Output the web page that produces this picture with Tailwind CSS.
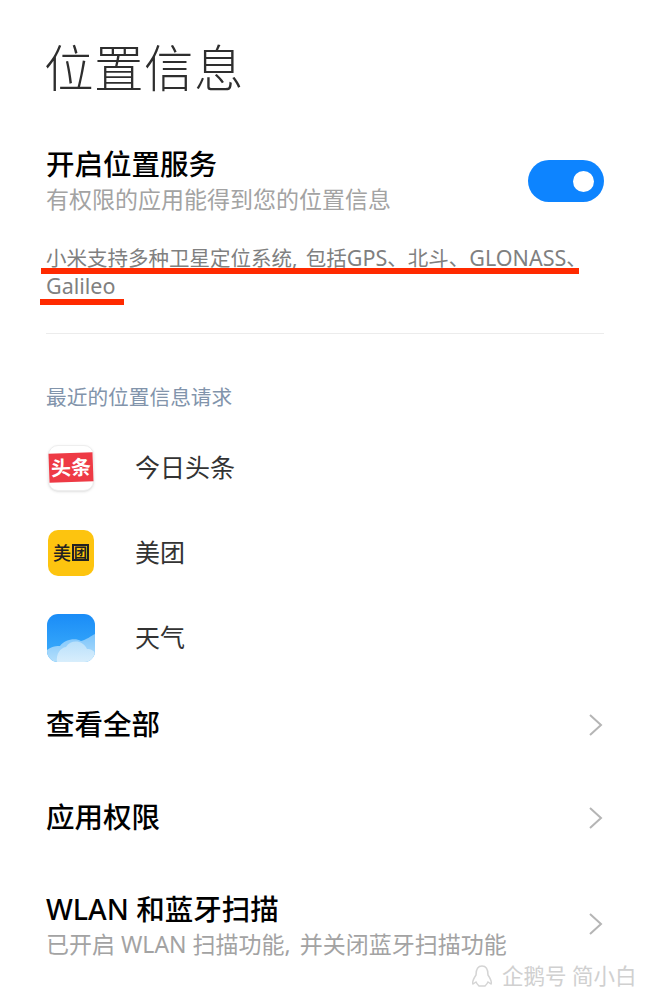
<!DOCTYPE html>
<html lang="zh-CN">
  <head>
    <meta charset="UTF-8" />
    <meta name="viewport" content="width=device-width, initial-scale=1.0" />
    <title>位置信息</title>
    <script src="https://cdn.jsdelivr.net/npm/@tailwindcss/browser@4"></script>
  </head>
  <body class="bg-white">
    <div class="relative w-[650px] h-[1000px] overflow-hidden px-[46px] font-['Noto_Sans','Noto_Sans_CJK_SC',sans-serif]">
      <h1 class="pt-[32px] h-[138px] -ml-[2px] text-[49.5px] leading-[72px] font-light text-[#2e2e2e] tracking-[0.5px]">位置信息</h1>

      <!-- location toggle -->
      <div class="flex items-center justify-between h-[86px]">
        <div>
          <div class="text-[28.5px] leading-[37px] font-medium text-black">开启位置服务</div>
          <div class="text-[23px] leading-[33px] text-[#a3a3a3]">有权限的应用能得到您的位置信息</div>
        </div>
        <div class="flex items-center justify-end w-[76px] h-[42px] rounded-full bg-[#0d84ff] pr-[10px]">
          <div class="w-[21px] h-[21px] rounded-full bg-white"></div>
        </div>
      </div>

      <p class="mt-[20px] text-[20.5px] leading-[28px] text-[#808080]">小米支持多种卫星定位系统<span class="mr-[3px]">, </span>包括<span class="text-[21.5px]">GPS</span>、北斗、<span class="text-[21.5px]">GLONASS</span>、<br /><span class="text-[21.5px]">Galileo</span></p>
      <div class="mt-[33px] border-t border-[#ececec]"></div>

      <div class="mt-[49px] h-[28px] text-[20.7px] leading-[28px] text-[#8294ab]">最近的位置信息请求</div>

      <!-- recent apps -->
      <div class="mt-[14px]">
        <div class="flex items-center h-[85px]">
          <div class="flex items-center w-[46px] h-[46px] ml-[2px] rounded-[10px] border border-[#eee] bg-white shadow-sm">
            <div class="flex items-center justify-center w-full h-[29px] -rotate-2 bg-[#ee3a45] text-white text-[20px] leading-none font-bold">头条</div>
          </div>
          <span class="ml-[41px] text-[25px] text-[#333]">今日头条</span>
        </div>
        <div class="flex items-center h-[85px]">
          <div class="flex items-center justify-center w-[46px] h-[46px] ml-[2px] rounded-[10px] bg-[#fdc40f] text-[#222] text-[18px] leading-none font-medium">美<span class="ml-[1px] border-2 border-[#222] text-[13px] font-bold">团</span></div>
          <span class="ml-[41px] text-[25px] text-[#333]">美团</span>
        </div>
        <div class="flex items-center h-[85px]">
          <svg class="ml-[1px]" width="48" height="48" viewBox="0 0 48 48">
            <defs>
              <linearGradient id="sky" x1="0" y1="0" x2="0" y2="1">
                <stop offset="0" stop-color="#1a8cf7" />
                <stop offset="1" stop-color="#3fb0fb" />
              </linearGradient>
              <linearGradient id="back" x1="0" y1="0" x2="0" y2="1">
                <stop offset="0" stop-color="#7cc4fb" />
                <stop offset="1" stop-color="#b4dffb" />
              </linearGradient>
              <linearGradient id="front" x1="0" y1="0" x2="0" y2="1">
                <stop offset="0" stop-color="#b9e0fb" />
                <stop offset="1" stop-color="#d8eefc" />
              </linearGradient>
              <clipPath id="tile"><rect width="48" height="48" rx="11" /></clipPath>
            </defs>
            <g clip-path="url(#tile)">
              <rect width="48" height="48" fill="url(#sky)" />
              <path d="M0 36C5 32 10 32 13 32C17 26 28 23 34 27C39 26 44 22 48 20V48H0Z" fill="url(#back)" />
              <path d="M10 48C9 40 13 34 19 33C24 25 36 26 40 35C44 35 48 37 48 40V48Z" fill="url(#front)" />
            </g>
          </svg>
          <span class="ml-[40px] text-[25px] text-[#333]">天气</span>
        </div>
      </div>

      <!-- settings rows -->
      <div class="flex items-center justify-between h-[93px] -mt-[2px]">
        <span class="text-[28.5px] font-medium text-black">查看全部</span>
        <svg width="16" height="24" viewBox="0 0 16 24" fill="none" stroke="#b5b5b5" stroke-width="2"><path d="M2 2L13 12L2 22" /></svg>
      </div>
      <div class="flex items-center justify-between h-[93px]">
        <span class="text-[28.5px] font-medium text-black">应用权限</span>
        <svg width="16" height="24" viewBox="0 0 16 24" fill="none" stroke="#b5b5b5" stroke-width="2"><path d="M2 2L13 12L2 22" /></svg>
      </div>
      <div class="flex items-center justify-between h-[124px]">
        <div>
          <div class="text-[28.5px] leading-[37px] font-medium text-black">WLAN 和蓝牙扫描</div>
          <div class="text-[23px] leading-[33px] text-[#a3a3a3]">已开启 WLAN 扫描功能<span class="mr-[3px]">, </span>并关闭蓝牙扫描功能</div>
        </div>
        <svg class="mb-[4px]" width="16" height="24" viewBox="0 0 16 24" fill="none" stroke="#b5b5b5" stroke-width="2"><path d="M2 2L13 12L2 22" /></svg>
      </div>

      <!-- red annotation marks drawn over the screenshot -->
      <div class="absolute left-[41px] top-[268px] w-[538px] h-[6px] bg-[#ff2a00]"></div>
      <div class="absolute left-[40px] top-[299px] w-[84px] h-[6px] bg-[#ff2a00]"></div>

      <!-- watermark -->
      <div class="absolute left-[471px] top-[964px] flex items-center gap-[9px] text-[21.5px] leading-none text-[#d0d0d0]">
        <svg width="22" height="24" viewBox="0 0 22 24" fill="none" stroke="#d4d4d4" stroke-width="1.5"><path d="M11 2C6 2 5 7 5 11C3 14 1 18 2 20L5 18C6 20 7 21 8 22H14C15 21 16 20 17 18L20 20C21 18 19 14 17 11C17 7 16 2 11 2Z" /></svg>
        <span>企鹅号 简小白</span>
      </div>
    </div>
  </body>
</html>
